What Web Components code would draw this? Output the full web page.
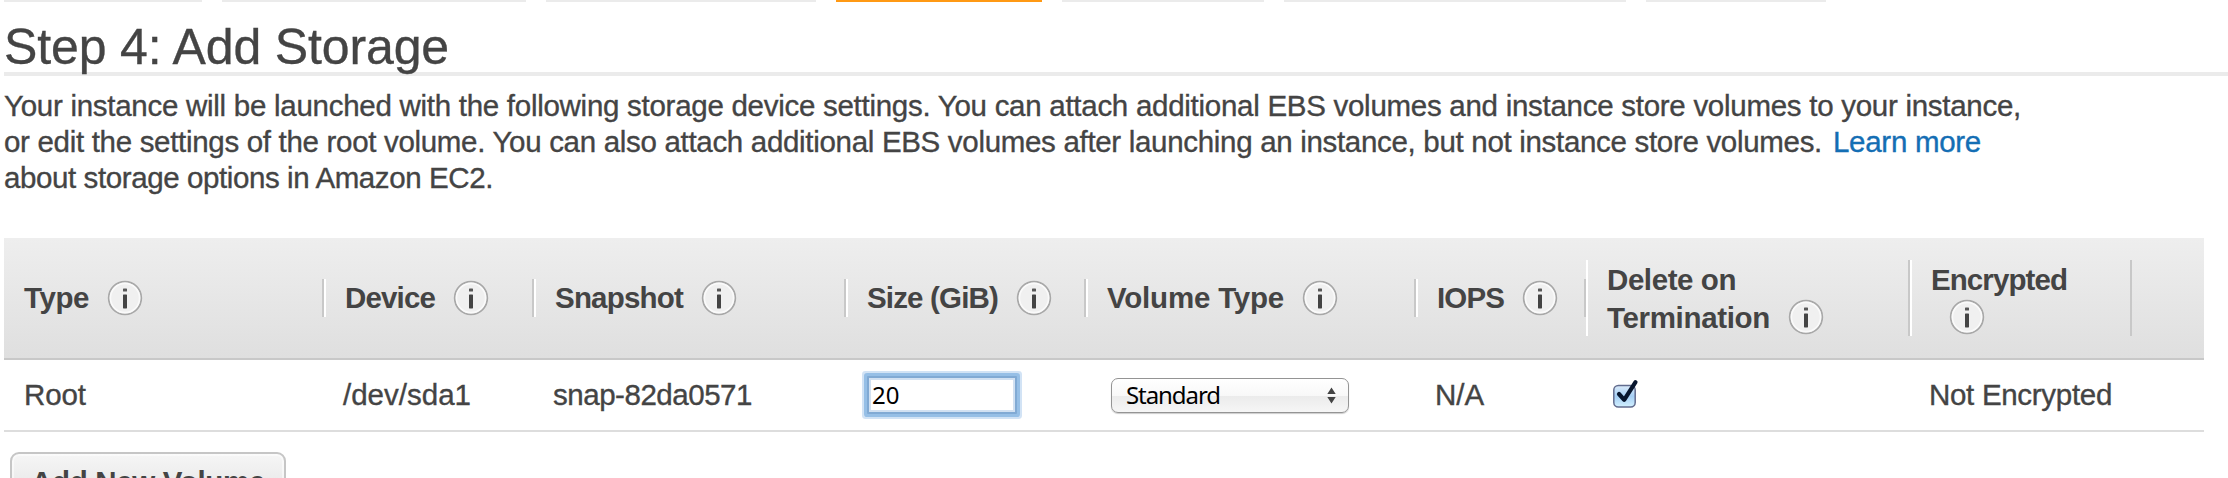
<!DOCTYPE html>
<html lang="en">
<head>
<meta charset="utf-8">
<title>Step 4: Add Storage</title>
<style>
html,body{margin:0;padding:0;background:#fff;height:478px;overflow:hidden}
body{font-family:"Liberation Sans",Arial,sans-serif;color:#444;font-size:29.5px}
</style>
</head>
<body>
<launch-wizard></launch-wizard>
<script>
const define = (name, html, init) => customElements.define(name, class extends HTMLElement {
  constructor() {
    super();
    this.attachShadow({ mode: 'open' }).innerHTML = html;
  }
  connectedCallback() { if (init) init(this, this.shadowRoot); }
});

define('wizard-step', `<style>
:host{display:block;height:2px;background:#ebebeb;flex:none}
:host([active]){background:#ff9914}
</style>`, (el) => { el.style.width = el.getAttribute('width') + 'px'; });

define('fit-text', `<style>
:host{display:block;white-space:pre;flex:none}
span{display:inline-block;white-space:pre;-webkit-text-stroke:var(--weight,.35px) currentColor}
</style><span><slot></slot></span>`, (el, root) => {
  const span = root.querySelector('span');
  const want = parseFloat(el.getAttribute('width'));
  const n = el.textContent.length;
  span.style.letterSpacing = '0px';
  const have = span.getBoundingClientRect().width;
  span.style.letterSpacing = ((want - have) / n).toFixed(4) + 'px';
});

define('info-icon', `<style>
:host{display:block;width:36px;height:36px;flex:none}
svg{display:block}
</style><svg width="36" height="36" viewBox="0 0 36 36">
<circle cx="18" cy="18" r="16.3" fill="#f0f0f0" stroke="#a8a8a8" stroke-width="1.8"/>
<circle cx="18" cy="18" r="14.6" fill="none" stroke="#fafafa" stroke-width="1.6"/>
<rect x="16" y="8.4" width="4" height="3.2" rx=".6" fill="#585858"/>
<rect x="16" y="14.4" width="4" height="14" rx=".6" fill="#444"/>
</svg>`);

define('header-cell', `<style>
:host{display:flex;box-sizing:border-box;align-items:center;height:38px;
 border-left:2px solid #fff;border-right:2px solid #c8c8c8;padding-left:19px;font-weight:bold;line-height:38px;--weight:0px}
:host([first]){border-left-color:transparent;padding-left:18px}
:host([tall]){height:76px;display:block}
</style><slot></slot>`);

define('size-input', `<style>
:host{display:block;box-sizing:border-box;width:150px;height:38px;background:#fff;border:2px solid #81aad4;
 box-shadow:0 0 0 3px #96bfe6,0 0 0 5px #d2e3f5,inset 0 0 0 2px #d2e1f2;border-radius:1px;
 font:24px/34px "Noto Sans",sans-serif;color:#000;padding-left:3px;--weight:0px}
</style><slot></slot>`);

define('volume-select', `<style>
:host{display:flex;box-sizing:border-box;width:238px;height:35px;border:1.5px solid #949494;border-radius:7px;
 background:linear-gradient(#fff,#f8f8f8 50%,#ebebeb 52%,#f6f6f6);box-shadow:0 1px 1px rgba(0,0,0,.2);
 font:24px/30px "Noto Sans",sans-serif;color:#000;padding:0 12px 2px 14px;justify-content:space-between;align-items:center;--weight:0px}
svg{display:block}
</style><slot></slot><svg width="9" height="18" viewBox="0 0 9 18"><path d="M4.5 1.4L8.7 8H.3zM4.5 17.6L.3 11h8.4z" fill="#444"/></svg>`);

define('check-box', `<style>
:host{display:block;width:30px;height:32px}
svg{display:block}
</style><svg width="30" height="32" viewBox="0 0 30 32">
<defs><linearGradient id="g" x1="0" y1="0" x2="0" y2="1"><stop offset="0" stop-color="#dcebfa"/><stop offset=".5" stop-color="#a5cff5"/><stop offset="1" stop-color="#d3f1ff"/></linearGradient></defs>
<rect x="2.8" y="6.5" width="21.4" height="21.6" rx="4.5" fill="url(#g)" stroke="#626c8e" stroke-width="1.5"/>
<path d="M8 15L13.2 20.8L24.5 3.2" fill="none" stroke="#08162e" stroke-width="4.2" stroke-linecap="round" stroke-linejoin="round"/>
</svg>`);

define('action-button', `<style>
:host{display:block;box-sizing:border-box;width:276px;height:64px;border:2px solid #c6c6c6;border-radius:9px;
 background:linear-gradient(#f6f6f6,#dedede);box-shadow:inset 0 0 0 2px rgba(255,255,255,.5);font-weight:bold;line-height:32px;padding:12px 0 0 19px;--weight:0px}
</style><slot></slot>`);

define('storage-table', `<style>
:host{display:block;width:2200px;margin-left:4px}
.row{display:grid;grid-template-columns:320px 210px 312px 240px 330px 170px 324px 222px 1fr;align-items:center}
.head{height:120px;background:linear-gradient(#eee,#dfdfdf);border-bottom:2px solid #c8c8c8}
.body{height:70px;border-bottom:2px solid #ddd;line-height:32px}
.line{display:flex;align-items:center;height:38px}
.line fit-text{padding-top:1px}
info-icon{margin-left:18px}
.c1{padding-left:20px}.c2{padding-left:19px}.c3{padding-left:19px}
size-input{margin-left:21px}volume-select{margin:1px 0 0 25px}.c6{padding-left:19px}
check-box{margin-left:25px}.c8{padding-left:19px}
</style>
<div class="row head">
<header-cell first><fit-text width="65">Type</fit-text><info-icon></info-icon></header-cell>
<header-cell><fit-text width="90">Device</fit-text><info-icon></info-icon></header-cell>
<header-cell><fit-text width="128">Snapshot</fit-text><info-icon></info-icon></header-cell>
<header-cell><fit-text width="131">Size (GiB)</fit-text><info-icon></info-icon></header-cell>
<header-cell><fit-text width="177">Volume Type</fit-text><info-icon></info-icon></header-cell>
<header-cell><fit-text width="67">IOPS</fit-text><info-icon></info-icon></header-cell>
<header-cell tall><div class="line"><fit-text width="129">Delete on</fit-text></div><div class="line"><fit-text width="163">Termination</fit-text><info-icon></info-icon></div></header-cell>
<header-cell tall><div class="line"><fit-text width="136">Encrypted</fit-text></div><div class="line"><info-icon></info-icon></div></header-cell>
</div>
<div class="row body">
<fit-text class="c1" width="62">Root</fit-text>
<fit-text class="c2" width="128">/dev/sda1</fit-text>
<fit-text class="c3" width="199">snap-82da0571</fit-text>
<size-input><fit-text width="27.6">20</fit-text></size-input>
<volume-select><fit-text width="94">Standard</fit-text></volume-select>
<fit-text class="c6" width="49">N/A</fit-text>
<check-box></check-box>
<fit-text class="c8" width="183">Not Encrypted</fit-text>
</div>`);

define('launch-wizard', `<style>
:host{display:block;width:2228px;height:478px;overflow:hidden}
nav{display:flex;gap:20px;padding-left:4px;height:2px}
h1{margin:0 0 0 4px;font-size:50px;font-weight:normal;height:70px;line-height:91px;border-bottom:4px solid #ebebeb}
.intro{margin:12px 0 0 4px;line-height:36px;height:150px}
.intro div{display:flex;gap:11px}
a{color:#146eb4}
action-button{margin:20px 0 0 10px}
</style>
<nav><wizard-step width="198"></wizard-step><wizard-step width="304"></wizard-step><wizard-step width="270"></wizard-step><wizard-step width="206" active></wizard-step><wizard-step width="202"></wizard-step><wizard-step width="342"></wizard-step><wizard-step width="180"></wizard-step></nav>
<h1><fit-text width="445">Step 4: Add Storage</fit-text></h1>
<div class="intro">
<div><fit-text width="2017">Your instance will be launched with the following storage device settings. You can attach additional EBS volumes and instance store volumes to your instance,</fit-text></div>
<div><fit-text width="1818">or edit the settings of the root volume. You can also attach additional EBS volumes after launching an instance, but not instance store volumes.</fit-text><a><fit-text width="148">Learn more</fit-text></a></div>
<div><fit-text width="489">about storage options in Amazon EC2.</fit-text></div>
</div>
<storage-table></storage-table>
<action-button><fit-text width="234">Add New Volume</fit-text></action-button>`);
</script>
</body>
</html>
